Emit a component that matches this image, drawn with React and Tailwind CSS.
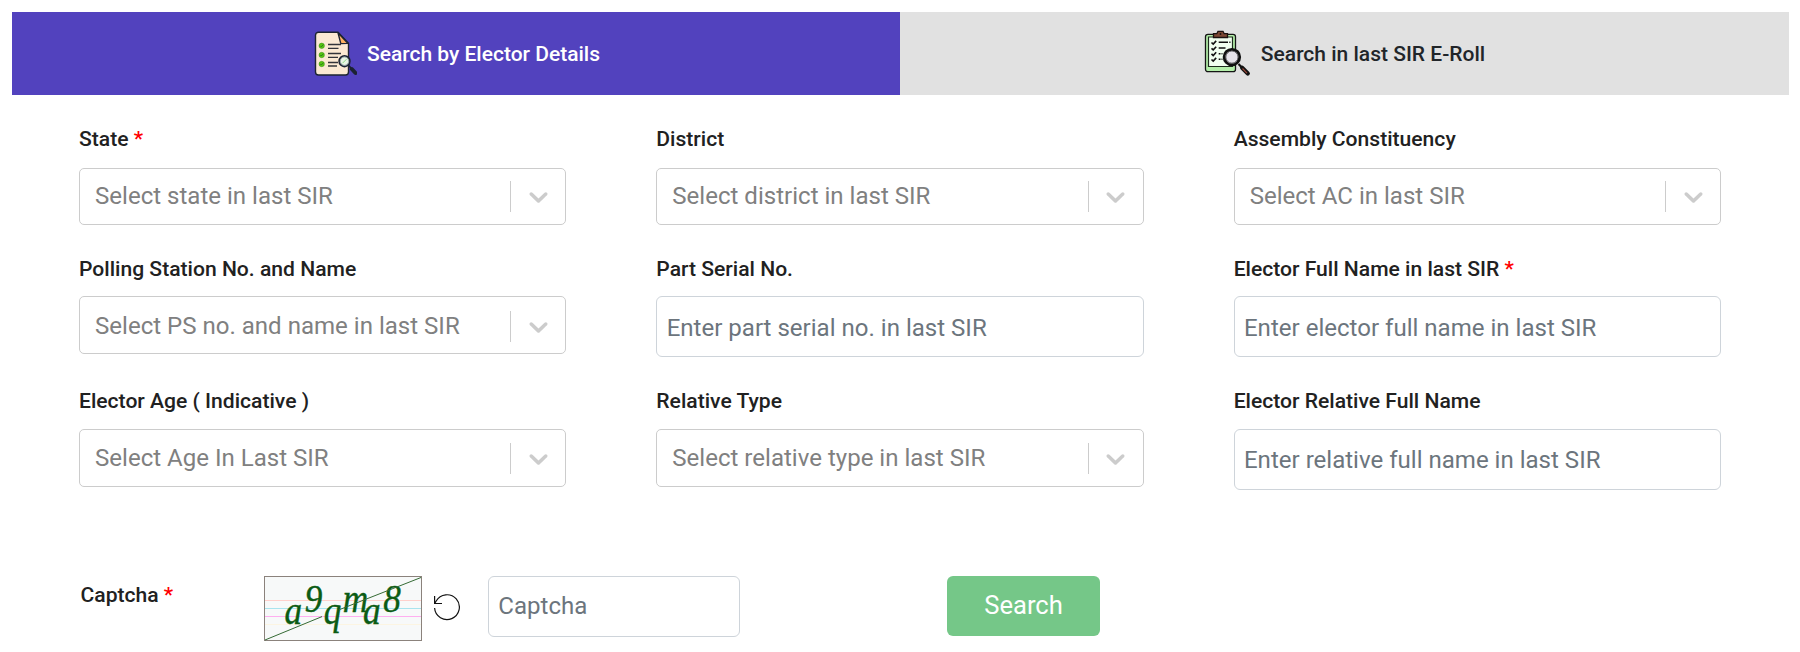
import React from "react";

function ListIcon() {
  return (
    <svg width="44" height="46" viewBox="-0.5 0 44 46" fill="none" className="block shrink-0">
      <path d="M5 1.2H24.5L35 12.2V41a3 3 0 0 1-3 3H5a3 3 0 0 1-3-3V4.2a3 3 0 0 1 3-3Z" fill="#fbe9d3" stroke="#1d2433" strokeWidth="1.4" />
      <path d="M24.5 1.8L34.5 12.4 27.3 12.6Z" fill="#fdb062" stroke="#1d2433" strokeWidth="1.4" strokeLinejoin="round" />
      <g fill="#55c512" stroke="#3c8f17" strokeWidth=".5">
        <circle cx="8.2" cy="14.8" r="2.7" />
        <circle cx="8.2" cy="24" r="2.7" />
        <circle cx="8.2" cy="33" r="2.7" />
      </g>
      <path d="M6.8 14.8l1 1 2-2.2M6.8 24l1 1 2-2.2M6.8 33l1 1 2-2.2" stroke="#2b6b20" strokeWidth=".8" />
      <path d="M14.5 13.5H27.5M14.5 17.3H25M14.5 22.5H27.5M14.5 26.3H24.5M14.5 31.5H24.5M14.5 35H23.5" stroke="#33343a" strokeWidth="1.3" />
      <path d="M34.7 34L37.5 37" stroke="#1d2433" strokeWidth="1.8" />
      <path d="M38.3 38L42 42" stroke="#1b2232" strokeWidth="4" strokeLinecap="round" />
      <circle cx="31" cy="30.2" r="5.3" fill="#e9f5e4" stroke="#1d2433" strokeWidth="1.8" />
      <circle cx="31" cy="30.2" r="4.2" stroke="#8fa0a4" strokeWidth=".9" />
      <path d="M29 32.2l4-4" stroke="#8fdc87" strokeWidth="1" />
    </svg>
  );
}

function ClipboardIcon() {
  return (
    <svg width="47" height="48" viewBox="0.5 0.5 47 48" fill="none" className="block shrink-0">
      <rect x="2" y="4.8" width="30" height="37.4" rx="2.5" fill="#b4efaa" stroke="#151515" strokeWidth="1.3" />
      <path d="M5 7.5H29V37H5Z" fill="#f1fff0" stroke="#1c2a1c" strokeWidth="1.2" />
      <path d="M10 8V4.2H13.3L14.5 1.8H19.5L20.7 4.2H24V8Z" fill="#7c4733" stroke="#1c1210" strokeWidth="1.3" />
      <circle cx="17" cy="4.5" r=".9" fill="#1c1210" />
      <path d="M8 13l1.7 1.6 3-3.2M8 18.8l1.7 1.6 3-3.2M8 24.4l1.7 1.6 3-3.2M8 30l1.7 1.6 3-3.2" stroke="#111" strokeWidth="1.6" />
      <path d="M15.2 12.8H24.5M25.8 12.8H27M15.2 18.6H22M15.2 24.3H17M18 24.3H19M15.2 29.8H17M18 29.8H19" stroke="#111" strokeWidth="1.5" />
      <path d="M35 34.5L38.6 38.2" stroke="#111" strokeWidth="2.2" />
      <path d="M38.6 38.2L44.3 44" stroke="#111" strokeWidth="4.2" strokeLinecap="round" />
      <path d="M39 39L43.5 43.6" stroke="#9c4a3b" strokeWidth="1.2" />
      <circle cx="28.4" cy="27.6" r="7.8" fill="#e6e3ea" stroke="#111" strokeWidth="2.8" />
      <circle cx="28.4" cy="27.6" r="6.1" stroke="#3d3d40" strokeWidth=".8" />
    </svg>
  );
}

function Tab({ icon, label, className }) {
  return (
    <button className={`flex h-[83px] items-center justify-center text-[21px] font-medium ${className}`}>
      {icon}
      <span className="ml-2.5 leading-8">{label}</span>
    </button>
  );
}

function Label({ children, required }) {
  return (
    <label className="block h-[30px] text-[21.1px] leading-[30px] font-medium whitespace-nowrap text-[#212121]">
      {children}
      {required && <span className="text-[#f00]"> *</span>}
    </label>
  );
}

function Select({ placeholder, className }) {
  return (
    <div className={`flex items-center rounded-[5px] border border-[#cccccc] bg-white ${className}`}>
      <span className="flex-1 pb-px pl-[15px] text-[24.05px] leading-8 whitespace-nowrap text-[#808080]">{placeholder}</span>
      <span className="h-[31px] w-px bg-[#cccccc]" />
      <span className="flex w-[54px] justify-center">
        <svg width="31" height="31" viewBox="0 0 20 20" fill="#cccccc">
          <path d="M4.516 7.548c0.436-0.446 1.043-0.481 1.576 0l3.908 3.747 3.908-3.747c0.533-0.481 1.141-0.446 1.574 0 0.436 0.445 0.408 1.197 0 1.615-0.406 0.418-4.695 4.502-4.695 4.502-0.217 0.223-0.502 0.335-0.787 0.335s-0.57-0.112-0.789-0.335c0 0-4.287-4.084-4.695-4.502s-0.436-1.17 0-1.615z" />
        </svg>
      </span>
    </div>
  );
}

function Input({ placeholder, className = "" }) {
  return (
    <input
      placeholder={placeholder}
      className={`block h-[61px] w-full rounded-[6px] border border-[#ced4da] bg-white px-[9.3px] text-[24.05px] placeholder:text-[#6c757d] placeholder:opacity-100 ${className}`}
    />
  );
}

function Captcha() {
  return (
    <svg width="158" height="65" viewBox="0 0 158 65" className="block shrink-0">
      <rect x=".5" y=".5" width="157" height="64" fill="#f7f9f9" stroke="#8b827c" />
      <path d="M1 24.5H157" stroke="#ffd0cc" />
      <path d="M1 32.5H157" stroke="#a9e4ee" />
      <path d="M1 40.5H157" stroke="#ffaff0" />
      <path d="M1 48.5H157" stroke="#fcf5e2" />
      <text
        transform="scale(.88 1)"
        x="23.3 46.2 68 89.5 112.5 135.6"
        y="48 36.5 48 36.5 48 36.5"
        fill="#0b5c14"
        stroke="#0b5c14"
        strokeWidth=".4"
        fontFamily="'Liberation Serif', serif"
        fontStyle="italic"
        fontSize="40"
      >
        a9qma8
      </text>
      <path d="M1 64L58 40.6M75 33.8L157 1.5" stroke="#356b35" strokeWidth="1" />
    </svg>
  );
}

function RefreshIcon() {
  return (
    <svg width="28" height="28" viewBox="0 0 28 28" fill="none" stroke="#111" strokeWidth="1.2" className="block shrink-0">
      <path d="M1.6 15A12.4 12.4 0 1 0 3.2 8L1.7 10.5M1.6 3V10.5H9" />
    </svg>
  );
}

const fields = [
  { label: "State", required: true, placeholder: "Select state in last SIR", gap: "mt-[14px]", size: "h-[57px] pb-px" },
  { label: "District", placeholder: "Select district in last SIR", gap: "mt-[14px]", size: "h-[57px] pb-px" },
  { label: "Assembly Constituency", placeholder: "Select AC in last SIR", gap: "mt-[14px]", size: "h-[57px] pb-px" },
  { label: "Polling Station No. and Name", placeholder: "Select PS no. and name in last SIR", gap: "mt-[12px]", size: "h-[58px] pt-0.5" },
  { label: "Part Serial No.", placeholder: "Enter part serial no. in last SIR", input: true, gap: "mt-[12px]", size: "pt-0.5" },
  { label: "Elector Full Name in last SIR", required: true, placeholder: "Enter elector full name in last SIR", input: true, gap: "mt-[12px]", size: "pt-0.5" },
  { label: "Elector Age ( Indicative )", placeholder: "Select Age In Last SIR", gap: "mt-[13px]", size: "h-[58px]" },
  { label: "Relative Type", placeholder: "Select relative type in last SIR", gap: "mt-[13px]", size: "h-[58px]" },
  { label: "Elector Relative Full Name", placeholder: "Enter relative full name in last SIR", input: true, gap: "mt-[13px]", size: "" },
];

export default function App() {
  return (
    <main className="h-[652px] w-[1800px] overflow-hidden bg-white px-3 pt-3 font-['Roboto',sans-serif]">
      <div className="flex w-[1777px]">
        <Tab icon={<ListIcon />} label="Search by Elector Details" className="w-[888px] bg-[#5242be] pl-px text-white" />
        <Tab icon={<ClipboardIcon />} label="Search in last SIR E-Roll" className="w-[889px] bg-[#e1e1e1] text-[#212529]" />
      </div>

      <div className="ml-[67px] grid w-[1642px] grid-cols-3 grid-rows-[130px_132px_91px] gap-x-[90px] pt-[29px]">
        {fields.map((f) => (
          <div key={f.label} className="flex flex-col">
            <Label required={f.required}>{f.label}</Label>
            <div className={f.gap}>
              {f.input ? <Input placeholder={f.placeholder} className={f.size} /> : <Select placeholder={f.placeholder} className={f.size} />}
            </div>
          </div>
        ))}
      </div>

      <div className="ml-[68px] flex items-start pt-[99px]">
        <div className="w-[184px] pt-1 pl-[0.5px]">
          <Label required>Captcha</Label>
        </div>
        <Captcha />
        <div className="ml-[11px] pt-[17px]">
          <RefreshIcon />
        </div>
        <Input placeholder="Captcha" className="ml-[27px] !w-[252px] pb-0.5" />
        <button className="ml-[207px] h-[60px] w-[153px] rounded-[6px] bg-[#75c788] pb-0.5 text-[25.6px] text-white">Search</button>
      </div>
    </main>
  );
}
